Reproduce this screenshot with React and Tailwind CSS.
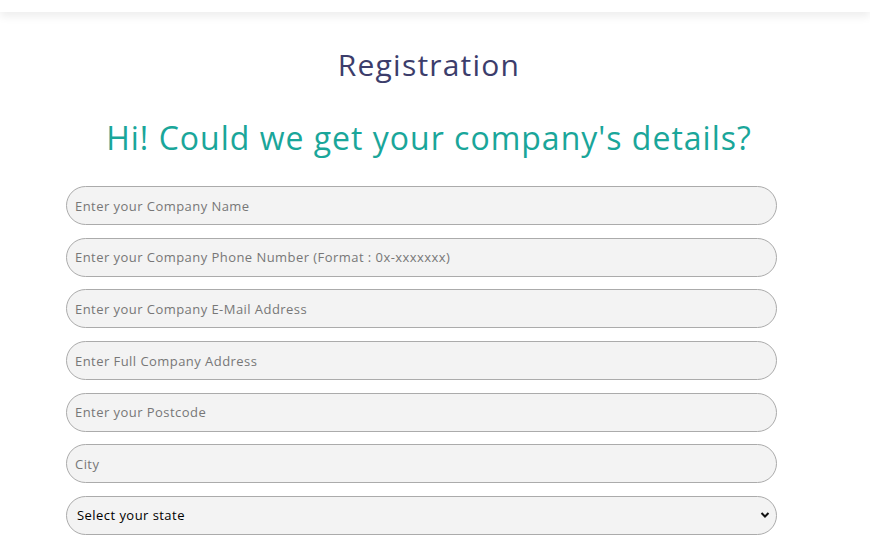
import React from 'react';

const fields = [
  'Enter your Company Name',
  'Enter your Company Phone Number (Format : 0x-xxxxxxx)',
  'Enter your Company E-Mail Address',
  'Enter Full Company Address',
  'Enter your Postcode',
  'City',
];

const inputClass =
  'h-[39px] w-full rounded-[20px] border border-[#ababab] bg-[#f3f3f3] px-[8px] text-[13px] tracking-[0.45px] text-[#333] outline-none placeholder:text-[#777]';

export default function App() {
  return (
    <div className="min-h-[555px] bg-white font-['Open_Sans',sans-serif]">
      <div className="h-[12px] bg-white shadow-[0_4px_10px_rgba(0,0,0,0.08)]" />
      <div className="pr-[12px]">
        <h1 className="mt-[33px] text-center text-[30px] font-medium leading-[40px] tracking-[1.2px] text-[#3c3d6b]">
          Registration
        </h1>
        <h2 className="mt-[31px] text-center text-[32px] font-medium leading-[44px] tracking-[1px] text-[#1aa69a]">
          Hi! Could we get your company's details?
        </h2>
      </div>
      <form className="mt-[26px] ml-[66px] w-[711px] flex flex-col gap-[12.7px]">
        {fields.map((f) => (
          <input key={f} type="text" placeholder={f} className={inputClass} />
        ))}
        <div className="relative">
          <select className="h-[39px] w-full appearance-none rounded-[20px] border border-[#ababab] bg-[#f3f3f3] px-[10px] text-[13px] tracking-[0.45px] text-black outline-none">
            <option>Select your state</option>
          </select>
          <svg
            className="pointer-events-none absolute right-[7px] top-[15px]"
            width="10"
            height="8"
            viewBox="0 0 10 8"
          >
            <path d="M1.5 2 L5 5.5 L8.5 2" fill="none" stroke="#111" strokeWidth="2" />
          </svg>
        </div>
      </form>
    </div>
  );
}
